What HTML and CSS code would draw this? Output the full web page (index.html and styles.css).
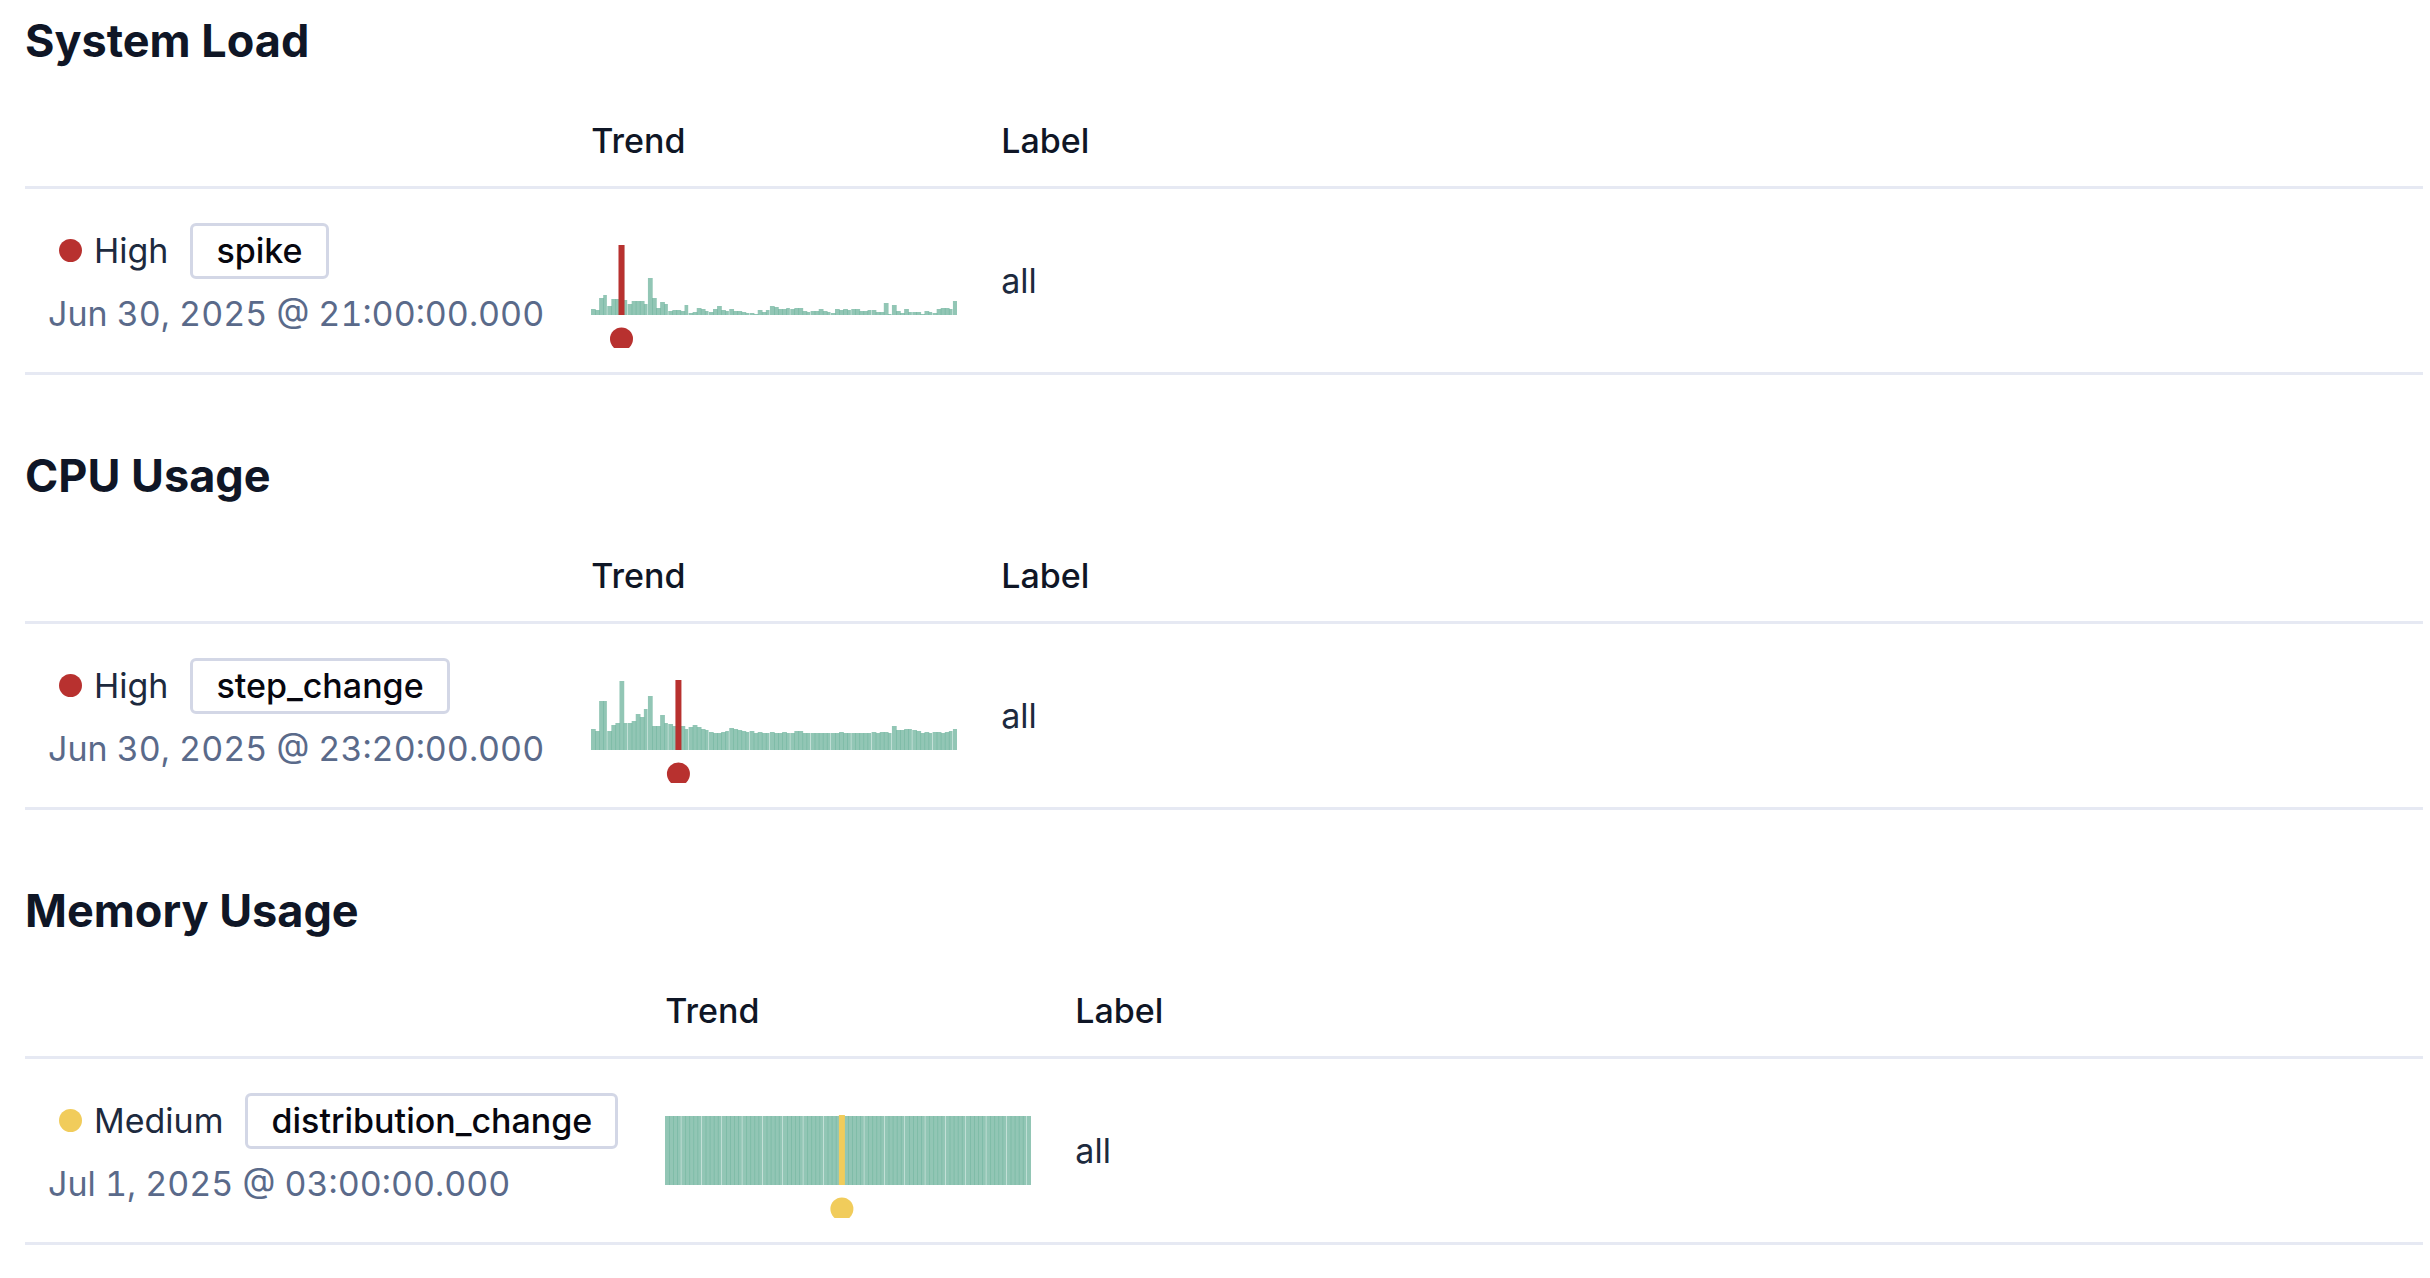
FILE: index.html
```html
<!DOCTYPE html>
<html lang="en">
<head>
  <meta charset="UTF-8">
  <title>Change Points</title>
  <link rel="stylesheet" href="styles.css">
</head>
<body>
  <section class="metric">
    <h2>System Load</h2>
    <table>
      <thead>
        <tr><th></th><th>Trend</th><th class="label">Label</th></tr>
      </thead>
      <tbody>
        <tr>
          <td>
            <div class="event">
              <span class="severity high">High</span>
              <span class="badge">spike</span>
            </div>
            <time>Jun 30, 2025 @ 21:00:00.000</time>
          </td>
          <td><svg class="trend high" data-chart="load" viewBox="0 -32 366 135"></svg></td>
          <td class="label">all</td>
        </tr>
      </tbody>
    </table>
  </section>

  <section class="metric">
    <h2>CPU Usage</h2>
    <table>
      <thead>
        <tr><th></th><th>Trend</th><th class="label">Label</th></tr>
      </thead>
      <tbody>
        <tr>
          <td>
            <div class="event">
              <span class="severity high">High</span>
              <span class="badge">step_change</span>
            </div>
            <time>Jun 30, 2025 @ 23:20:00.000</time>
          </td>
          <td><svg class="trend high" data-chart="cpu" viewBox="0 -32 366 135"></svg></td>
          <td class="label">all</td>
        </tr>
      </tbody>
    </table>
  </section>

  <section class="metric">
    <h2>Memory Usage</h2>
    <table>
      <thead>
        <tr><th></th><th>Trend</th><th class="label">Label</th></tr>
      </thead>
      <tbody>
        <tr>
          <td>
            <div class="event">
              <span class="severity medium">Medium</span>
              <span class="badge">distribution_change</span>
            </div>
            <time>Jul 1, 2025 @ 03:00:00.000</time>
          </td>
          <td><svg class="trend medium" data-chart="memory" viewBox="0 -32 366 135"></svg></td>
          <td class="label">all</td>
        </tr>
      </tbody>
    </table>
  </section>

  <script src="charts.js"></script>
</body>
</html>
```
FILE: styles.css
```css
body {
  font-family: Inter, sans-serif;
  font-size: 34px;
  line-height: 50px;
  color: #1d2a3e;
  background: #fff;
  margin: 0;
  padding: 13px 7px 0 25px;
}

.metric {
  margin-bottom: 73px;
}

h2 {
  margin: 0 0 27px;
  font-size: 45px;
  line-height: 56px;
  font-weight: 700;
  color: #0f1626;
}

table {
  width: 100%;
  border-collapse: separate;
  border-spacing: 0;
}

th,
td {
  padding: 24px 24px 24px 23px;
  text-align: left;
  white-space: nowrap;
  border-bottom: 3px solid #e6e9f3;
}

th {
  padding-top: 20px;
  padding-bottom: 20px;
  font-weight: 500;
  color: #0f1626;
}

/* last column takes what is left */
.label {
  width: 100%;
  padding-left: 20px;
}

.event {
  display: flex;
  align-items: center;
  gap: 22px;
  margin-bottom: 10px;
}

.severity {
  display: flex;
  align-items: center;
  gap: 12px;
  padding-left: 11px;
}

.severity::before {
  content: "";
  width: 23px;
  height: 23px;
  border-radius: 50%;
  background: currentColor;
}

.severity.high::before {
  background: #b8312f;
}

.severity.medium::before {
  background: #f1cc5b;
}

.badge {
  padding: 0 23px;
  border: 3px solid #d3d7e6;
  border-radius: 6px;
  font-weight: 500;
  color: #07070f;
}

time {
  display: block;
  color: #5a6a8a;
  font-variant-numeric: tabular-nums;
}

.trend {
  display: block;
  width: 366px;
  height: 135px;
}

.trend .bar {
  fill: #6db39c;
  fill-opacity: 0.75;
}

.trend.high .marker {
  fill: #b8312f;
}

.trend.medium .marker {
  fill: #f1cc5b;
}
```
FILE: charts.js
```js
const charts = {
  load: {
    marker: 7,
    values: [
      6, 5, 17, 20, 9, 16, 16, 70, 15, 11, 14, 14, 14, 11, 37, 17, 7, 13, 11, 4,
      5, 5, 4, 10, 2, 3, 7, 6, 4, 3, 6, 9, 5, 4, 6, 4, 4, 3, 2, 2,
      1, 5, 3, 5, 9, 8, 6, 6, 7, 6, 7, 7, 4, 3, 4, 4, 6, 4, 3, 2,
      6, 5, 6, 5, 6, 6, 4, 4, 5, 5, 3, 3, 12, 1, 10, 4, 2, 6, 3, 3,
      3, 1, 4, 3, 2, 6, 7, 7, 6, 14
    ]
  },
  cpu: {
    marker: 21,
    values: [
      21, 19, 49, 49, 19, 25, 27, 69, 27, 27, 29, 36, 33, 41, 54, 24, 24, 35, 27, 26,
      24, 24, 24, 21, 23, 25, 23, 21, 20, 18, 17, 17, 18, 19, 22, 21, 20, 19, 18, 19,
      17, 18, 17, 17, 18, 17, 17, 18, 17, 17, 19, 19, 17, 17, 17, 17, 17, 17, 17, 17,
      17, 18, 17, 17, 17, 17, 17, 17, 17, 18, 17, 18, 18, 17, 24, 20, 20, 21, 21, 20,
      19, 17, 18, 17, 18, 18, 17, 18, 19, 21
    ]
  },
  memory: {
    marker: 43,
    values: Array(90).fill(69)
  }
};

const base = 70;
const step = 366 / 90;

function add(svg, tag, attrs) {
  const el = document.createElementNS("http://www.w3.org/2000/svg", tag);
  for (const key in attrs) el.setAttribute(key, attrs[key]);
  svg.appendChild(el);
}

document.querySelectorAll(".trend").forEach(svg => {
  const { marker, values } = charts[svg.dataset.chart];

  // neighbouring bars overlap a little, which gives the darker seams
  values.forEach((value, i) => {
    add(svg, "rect", { class: "bar", x: i * step, y: base - value, width: step + (i % 5 == 3 ? -0.4 : 0.7), height: value });
  });

  const center = (marker + 0.5) * step;
  add(svg, "rect", { class: "marker", x: center - 3, y: 0, width: 6, height: base });
  add(svg, "circle", { class: "marker", cx: center, cy: 94, r: 11.5 });
});
```
